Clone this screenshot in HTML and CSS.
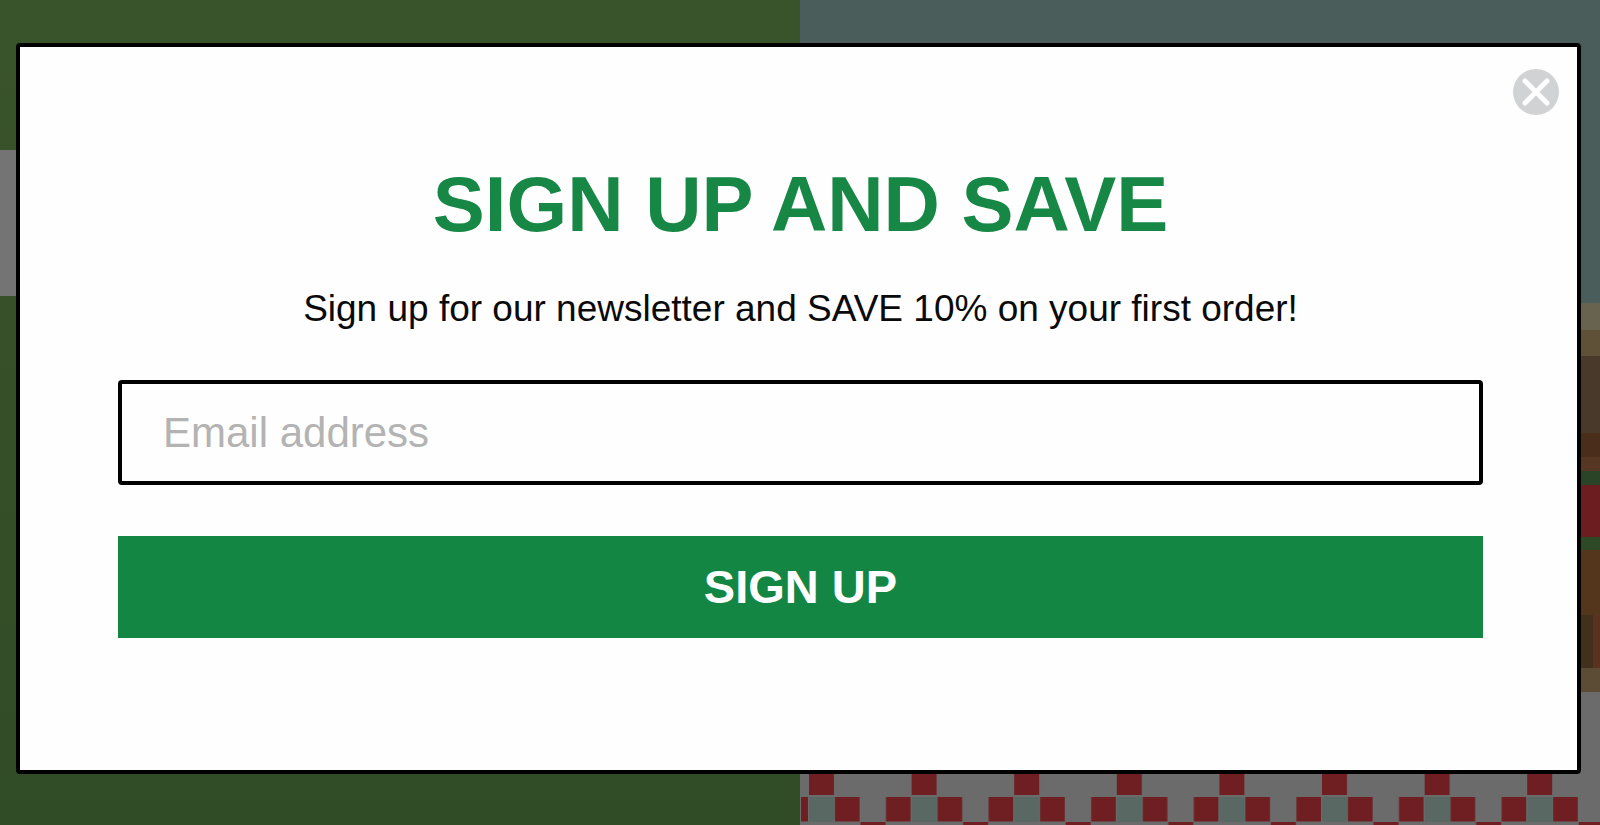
FILE: index.html
```
<!DOCTYPE html>
<html lang="en">
<head>
<meta charset="utf-8">
<meta name="viewport" content="width=device-width, initial-scale=1">
<title>Sign up and save</title>
<link rel="stylesheet" href="styles.css">
</head>
<body>
<div class="backdrop" aria-hidden="true">
  <div class="backdrop-left"><div class="backdrop-band"></div></div>
  <svg class="backdrop-right" viewBox="0 0 800 825" preserveAspectRatio="xMaxYMin slice">
    <defs>
      <pattern id="cloth" x="9" y="772" width="102.6" height="100" patternUnits="userSpaceOnUse">
        <rect width="102.6" height="100" fill="#6b6b6b"/>
        <rect y="25" width="25.6" height="25" fill="#5a6864"/>
        <g fill="#6f1f22">
          <rect width="25" height="23"/>
          <rect x="26" y="25" width="24.6" height="24.5"/>
          <rect x="77" y="25" width="24.6" height="24.5"/>
          <rect x="51.5" y="50" width="25" height="24"/>
        </g>
      </pattern>
    </defs>
    <rect width="800" height="825" fill="#4a5d5a"/>
    <rect x="700" y="303" width="100" height="27" fill="#67634f"/>
    <rect x="700" y="330" width="100" height="26" fill="#5f5038"/>
    <rect x="700" y="356" width="100" height="77" fill="#49392a"/>
    <rect x="700" y="433" width="100" height="24" fill="#4a2e1b"/>
    <rect x="700" y="457" width="100" height="14" fill="#553723"/>
    <rect x="700" y="471" width="100" height="14" fill="#294426"/>
    <rect x="700" y="485" width="100" height="52" fill="#6b1d20"/>
    <rect x="700" y="537" width="100" height="13" fill="#2d4926"/>
    <rect x="700" y="550" width="100" height="65" fill="#53361c"/>
    <rect x="700" y="615" width="100" height="53" fill="#42301d"/>
    <rect x="793" y="615" width="7" height="53" fill="#5b3220"/>
    <rect x="700" y="668" width="100" height="24" fill="#5d4c35"/>
    <rect y="692" width="800" height="133" fill="#6b6b6b"/>
    <rect x="1" y="772" width="779" height="53" fill="url(#cloth)"/>
    <rect x="780" y="822" width="20" height="3" fill="#6f1f22"/>
  </svg>
</div>

<main class="modal" role="dialog" aria-modal="true" aria-labelledby="title">
  <button class="close" type="button" aria-label="Close">
    <svg viewBox="0 0 46 46"><circle cx="23" cy="23" r="23" fill="#d0d2d3"/><path d="M12 12L34 34M34 12L12 34" stroke="#fff" stroke-width="5" stroke-linecap="round"/></svg>
  </button>
  <h1 class="title" id="title">SIGN UP AND SAVE</h1>
  <p class="lead">Sign up for our newsletter and SAVE 10% on your first order!</p>
  <form class="form">
    <input class="email" type="email" placeholder="Email address" aria-label="Email address">
    <button class="submit" type="submit">SIGN UP</button>
  </form>
</main>
</body>
</html>
```
FILE: styles.css
```
* {
  box-sizing: border-box;
}

body {
  margin: 0;
  min-height: 100vh;
  padding: 43px 19px 48px 16px;
  font-family: "Liberation Sans", Arial, sans-serif;
  overflow-x: hidden;
}

.backdrop {
  position: fixed;
  inset: 0;
  z-index: -1;
  display: grid;
  grid-template-columns: 1fr 1fr;
}

.backdrop-left {
  padding-top: 150px;
  background: linear-gradient(#39532b, #375029 40%, #304c26);
}

.backdrop-band {
  height: 146px;
  background: #757475;
}

.backdrop-right {
  display: block;
  width: 100%;
  height: 100%;
}

.modal {
  position: relative;
  padding: 112px 94px 132px 98px;
  border: 4px solid #000;
  border-radius: 4px;
  background: #fefefe;
  text-align: center;
}

.close {
  position: absolute;
  top: 22px;
  right: 18px;
  width: 46px;
  height: 46px;
  padding: 0;
  border: 0;
  background: none;
  cursor: pointer;
}

.close svg {
  display: block;
}

.title {
  margin: 0 0 38px;
  color: #178745;
  font-size: 78px;
  line-height: 90px;
}

.lead {
  margin: 0 0 49px;
  color: #0a0a0a;
  font-size: 37px;
  line-height: 44px;
}

.form {
  display: flex;
  flex-direction: column;
  gap: 51px;
}

.email,
.submit {
  width: 100%;
  font-family: inherit;
}

.email {
  height: 105px;
  padding: 0 41px;
  border: 4px solid #000;
  border-radius: 4px;
  background: #fefefe;
  color: #0a0a0a;
  font-size: 42px;
}

.email::placeholder {
  color: #b3b3b3;
  opacity: 1;
}

.submit {
  height: 102px;
  padding: 0 0 2px;
  border: 0;
  background: #148644;
  color: #fff;
  font-size: 47px;
  font-weight: bold;
  cursor: pointer;
}
```
